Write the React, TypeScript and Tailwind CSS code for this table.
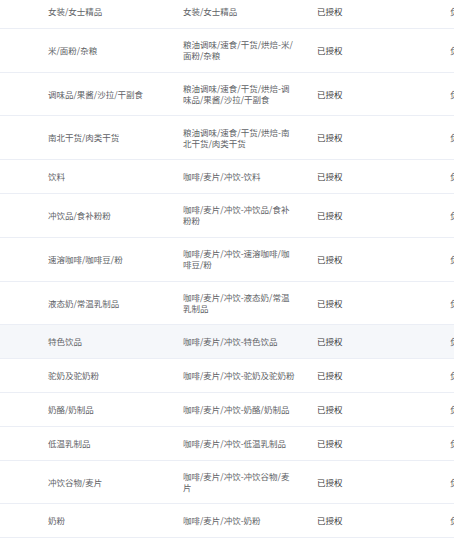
const rows: { name: string; path: string; tall?: boolean; active?: boolean }[] = [
  { name: "女装/女士精品", path: "女装/女士精品" },
  { name: "米/面粉/杂粮", path: "粮油调味/速食/干货/烘焙-米/面粉/杂粮", tall: true },
  { name: "调味品/果酱/沙拉/干副食", path: "粮油调味/速食/干货/烘焙-调味品/果酱/沙拉/干副食", tall: true },
  { name: "南北干货/肉类干货", path: "粮油调味/速食/干货/烘焙-南北干货/肉类干货", tall: true },
  { name: "饮料", path: "咖啡/麦片/冲饮-饮料" },
  { name: "冲饮品/食补粉粉", path: "咖啡/麦片/冲饮-冲饮品/食补粉粉", tall: true },
  { name: "速溶咖啡/咖啡豆/粉", path: "咖啡/麦片/冲饮-速溶咖啡/咖啡豆/粉", tall: true },
  { name: "液态奶/常温乳制品", path: "咖啡/麦片/冲饮-液态奶/常温乳制品", tall: true },
  { name: "特色饮品", path: "咖啡/麦片/冲饮-特色饮品", active: true },
  { name: "驼奶及驼奶粉", path: "咖啡/麦片/冲饮-驼奶及驼奶粉" },
  { name: "奶酪/奶制品", path: "咖啡/麦片/冲饮-奶酪/奶制品" },
  { name: "低温乳制品", path: "咖啡/麦片/冲饮-低温乳制品" },
  { name: "冲饮谷物/麦片", path: "咖啡/麦片/冲饮-冲饮谷物/麦片", tall: true },
  { name: "奶粉", path: "咖啡/麦片/冲饮-奶粉" },
];

export default function App() {
  return (
    <main
      className="w-[454px] h-[550px] overflow-hidden bg-white text-[8.5px] text-[#606266]"
      style={{ fontFamily: '"Noto Sans CJK SC", "Noto Sans", sans-serif' }}
    >
      <div className="flex flex-col mt-[-5px]">
        {rows.map((r) => (
          <div
            key={r.name}
            className={
              (r.tall ? "h-[43.8px] " : "h-[33.8px] ") +
              (r.active ? "bg-[#f5f7fa] " : "") +
              "flex items-center shrink-0 border-b border-[#ebeef5] pl-[48px] whitespace-nowrap"
            }
          >
            <div className="w-[135px] shrink-0">{r.name}</div>
            <div className="w-[134px] shrink-0">
              <div className="max-w-[114px] whitespace-normal leading-[11px]">{r.path}</div>
            </div>
            <div className="w-[133px] shrink-0 text-[#3a3a3a]">已授权</div>
            <div className="flex-1 overflow-hidden">负责人</div>
          </div>
        ))}
      </div>
    </main>
  );
}
